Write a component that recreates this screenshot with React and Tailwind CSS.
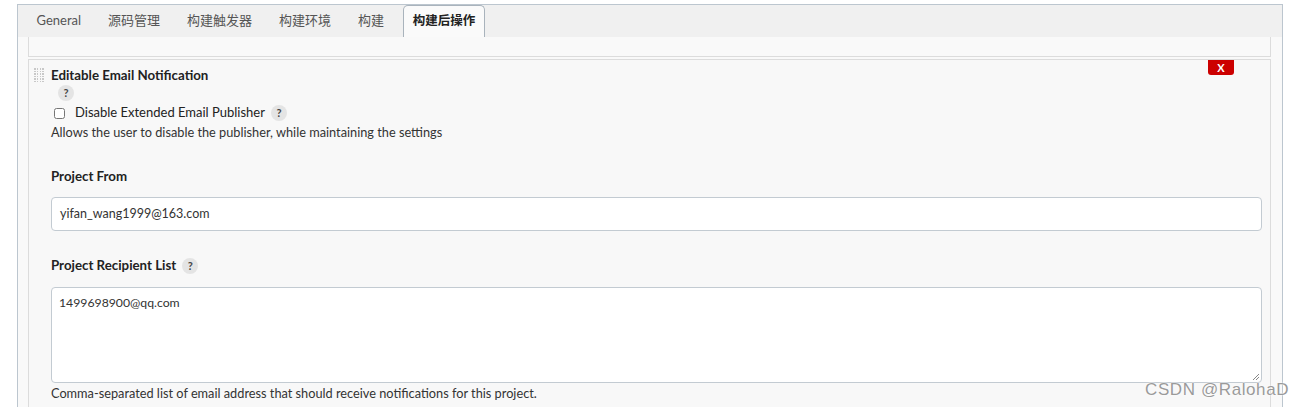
import React from 'react'

const font = { fontFamily: 'Lato, "Noto Sans CJK SC", sans-serif' }

const tabs = ['General', '源码管理', '构建触发器', '构建环境', '构建', '构建后操作']

function Help({ className = '' }) {
  return (
    <span className={`inline-flex items-center justify-center w-4 h-4 rounded-full bg-[#e4e4e4] text-[11px] font-bold text-[#444] ${className}`}>
      ?
    </span>
  )
}

function Handle() {
  // dotted drag grip
  return (
    <div className="grid grid-cols-4 gap-[1px] w-[10px]">
      {Array.from({ length: 24 }).map((_, i) => (
        <span key={i} className="w-[1.5px] h-[1.5px] bg-[#c8c8c8]" />
      ))}
    </div>
  )
}

export default function App() {
  return (
    <div className="relative w-[1305px] h-[407px] bg-white overflow-hidden text-[#333]" style={font}>
      <div className="pt-[4px] pl-[17px] w-[1283px]">
        <div className="border-t border-l border-r border-[#bcc6cf] bg-[#f9f9f9] h-[420px]">
          {/* tabs */}
          <div className="flex items-end h-[32px] bg-[#f0f0f0] pl-[5px]">
            {tabs.map((t, i) => {
              const active = i === tabs.length - 1
              return (
                <div
                  key={t}
                  className={
                    active
                      ? 'h-[32px] flex items-center px-[9px] ml-[5px] bg-[#fafafa] border border-b-0 border-[#a9b3bc] rounded-t-[5px] text-[12.5px] font-bold text-[#222]'
                      : 'h-[32px] flex items-center px-[13.5px] text-[13px] text-[#555]'
                  }
                >
                  {t}
                </div>
              )
            })}
          </div>

          <div className="px-[10px] pr-[11px]">
            {/* previous section tail */}
            <div className="h-[20px] border-l border-r border-b border-[#dcdcdc]" />

            {/* Editable Email Notification */}
            <div className="relative mt-[2px] border border-b-0 border-[#dcdcdc] bg-[#f8f8f8] h-[360px]">
              <div className="absolute right-[36px] top-0 w-[26px] h-[15px] bg-[#cc0000] rounded-b-[3px] flex items-center justify-center text-white text-[11px] font-bold leading-none">
                X
              </div>
              <div className="flex pt-[6px] pl-[5px] pr-[8px]">
                <div className="pt-[2px]">
                  <Handle />
                </div>
                <div className="flex-1 ml-[7px]">
                  <div className="text-[13.3px] font-bold text-[#222] leading-[18px]">Editable Email Notification</div>
                  <div className="ml-[7px] h-[18px] flex items-center">
                    <Help />
                  </div>
                  <div className="mt-[1px] flex items-center h-[20px]">
                    <input type="checkbox" className="ml-[3px] w-[11px] h-[11px] accent-white" />
                    <span className="ml-[10px] text-[13px] text-[#222]">Disable Extended Email Publisher</span>
                    <Help className="ml-[6px]" />
                  </div>
                  <div className="text-[12.75px] text-[#333] leading-[18px]">
                    Allows the user to disable the publisher, while maintaining the settings
                  </div>

                  <div className="mt-[26px] text-[13.3px] font-bold text-[#222] leading-[18px]">Project From</div>
                  <div className="mt-[12px] h-[34px] bg-white border border-[#c3cbd2] rounded-[4px] flex items-center px-[8px] text-[12.5px] text-[#333]">
                    yifan_wang1999@163.com
                  </div>

                  <div className="mt-[26px] flex items-center h-[18px]">
                    <span className="text-[13.3px] font-bold text-[#222]">Project Recipient List</span>
                    <Help className="ml-[6px]" />
                  </div>
                  <div className="relative mt-[12px] h-[96px] bg-white border border-[#c3cbd2] rounded-[4px] px-[7px] pt-[6px] text-[12.25px] text-[#333]">
                    1499698900@qq.com
                    <svg className="absolute right-[1px] bottom-[1px]" width="9" height="9" viewBox="0 0 9 9">
                      <path d="M8 2 L2 8 M8 5 L5 8" stroke="#888" strokeWidth="1" />
                    </svg>
                  </div>
                  <div className="mt-[1px] text-[12.75px] text-[#333] leading-[18px]">
                    Comma-separated list of email address that should receive notifications for this project.
                  </div>
                </div>
              </div>
            </div>
          </div>
        </div>
      </div>

      {/* watermark */}
      <div
        className="absolute left-[1145px] top-[377px] text-[17px] text-[#9a9a9a] tracking-[0.6px]"
        style={{ fontFamily: '"Liberation Sans", sans-serif', textShadow: '0 0 2px #fff, 0 0 1px #fff' }}
      >
        CSDN @RalohaD
      </div>
    </div>
  )
}
